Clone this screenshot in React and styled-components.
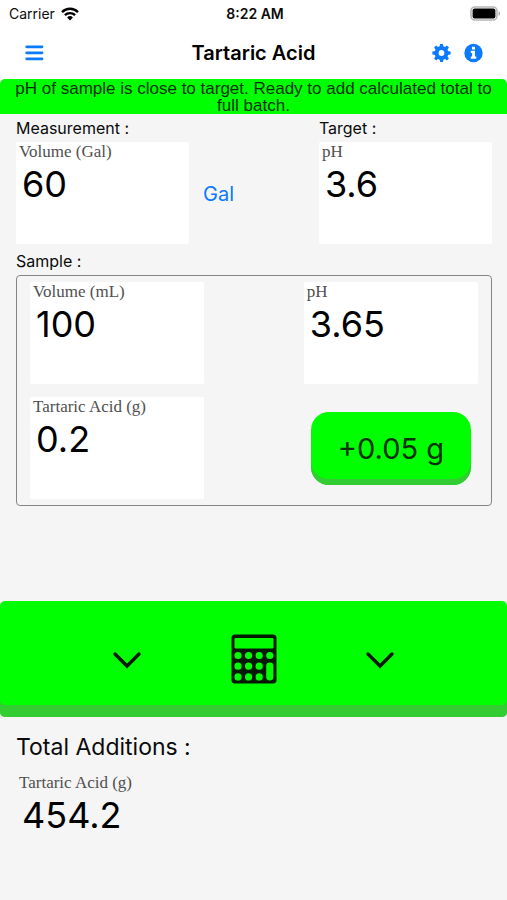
import React from "react";
import styled, { createGlobalStyle } from "styled-components";

const sans = `Inter, "Liberation Sans", sans-serif`;
const serif = `"Liberation Serif", serif`;
const lime = "#00ff00";
const limeShade = "#33cc33";
const blue = "#0a7aff";

const GlobalStyle = createGlobalStyle`
  *, *::before, *::after { box-sizing: border-box; }
  body { margin: 0; background: #f5f5f5; color: #0b0b0b; font-family: ${sans}; }
  button, input { font: inherit; color: inherit; }
  svg { display: block; }
`;

const Screen = styled.div`
  min-height: 100vh;
  display: flex;
  flex-direction: column;
`;

const StatusBar = styled.div`
  display: grid;
  grid-template-columns: 1fr auto 1fr;
  align-items: center;
  height: 27px;
  padding: 0 6px 0 9px;
  background: #fff;
  font-size: 14px;
`;

const Carrier = styled.div`
  display: flex;
  align-items: center;
  gap: 6px;
`;

const Clock = styled.div`
  font-weight: 600;
`;

const BatteryHolder = styled.div`
  justify-self: end;
`;

const NavBar = styled.header`
  display: grid;
  grid-template-columns: 1fr auto 1fr;
  align-items: center;
  height: 52px;
  padding: 0 24px;
  background: #fff;
`;

const Title = styled.h1`
  margin: 0;
  font-size: 20px;
  font-weight: 600;
  line-height: 24px;
  color: #000;
`;

const NavActions = styled.div`
  display: flex;
  justify-content: flex-end;
  gap: 12px;
`;

const IconButton = styled.button`
  display: flex;
  padding: 0;
  border: 0;
  background: none;
  color: ${blue};
  cursor: pointer;
`;

const BannerHolder = styled.div`
  background: linear-gradient(#fff 50%, #f5f5f5 50%);
`;

const Banner = styled.p`
  margin: 0;
  padding: 1px 8px 0;
  border-radius: 5px 5px 0 0;
  background: ${lime};
  font-family: "Liberation Sans", sans-serif;
  font-size: 17px;
  line-height: 17px;
  text-align: center;
  color: #063006;
`;

const Content = styled.main`
  padding: 4px 15px 0 16px;
`;

const MeasureGrid = styled.div`
  display: grid;
  grid-template-columns: 4fr 3fr 4fr;
  row-gap: 4px;
`;

const SectionLabel = styled.h2`
  margin: 0;
  font-size: 16px;
  font-weight: 400;
  line-height: 20px;
`;

const TargetLabel = styled(SectionLabel)`
  grid-column: 3;
`;

const FieldBox = styled.label`
  display: flex;
  flex-direction: column;
  min-width: 0;
  height: 102px;
  padding: 0 3px;
  border-radius: 2px;
  background: ${(p) => (p.$plain ? "transparent" : "#fff")};
`;

const FieldName = styled.span`
  font-family: ${serif};
  font-size: 17px;
  line-height: 20px;
  color: #505050;
`;

const fieldValue = `
  width: 100%;
  height: 44px;
  padding: 0 3px;
  border: 0;
  background: none;
  font-family: ${sans};
  font-size: 36px;
  line-height: 44px;
  color: #000;
  outline: none;
`;

const FieldInput = styled.input`
  ${fieldValue}
`;

const FieldOutput = styled.output`
  ${fieldValue}
`;

const UnitButton = styled.button`
  justify-self: start;
  align-self: center;
  padding: 2px 14px 0;
  border: 0;
  background: none;
  color: ${blue};
  font-size: 20px;
  line-height: 24px;
  cursor: pointer;
`;

const SampleSection = styled.section`
  margin-top: 7px;
`;

const SamplePanel = styled.div`
  display: grid;
  grid-template-columns: 7fr 4fr 7fr;
  row-gap: 13px;
  margin-top: 4px;
  padding: 6px 13px;
  border: 1px solid #858585;
  border-radius: 4px;
`;

const ThirdColumn = styled.div`
  grid-column: 3;
  display: flex;
  flex-direction: column;
  justify-content: center;
`;

const AddButton = styled.button`
  height: 73px;
  margin: 0 7px;
  padding: 0;
  border: 0;
  border-radius: 18px;
  background: ${lime};
  box-shadow: inset 0 -6px 0 ${limeShade};
  color: #063006;
  font-size: 29px;
  cursor: pointer;
`;

const CalculateButton = styled.button`
  display: flex;
  justify-content: center;
  align-items: center;
  width: 100%;
  height: 116px;
  margin-top: 95px;
  padding: 0;
  border: 0;
  border-radius: 5px;
  background: ${lime};
  box-shadow: inset 0 -12px 0 ${limeShade};
  color: #031903;
  cursor: pointer;
`;

const IconSlot = styled.span`
  display: flex;
  justify-content: center;
  width: 25%;
`;

const Totals = styled.section`
  padding: 15px 15px 0 16px;
`;

const TotalsTitle = styled.h2`
  margin: 0 0 11px;
  font-size: 23px;
  font-weight: 400;
  line-height: 30px;
`;

function Field({ name, value }) {
  return (
    <FieldBox>
      <FieldName>{name}</FieldName>
      <FieldInput defaultValue={value} inputMode="decimal" />
    </FieldBox>
  );
}

const WifiIcon = () => (
  <svg width="18" height="14" viewBox="0 0 18 14" fill="none" stroke="#000" strokeWidth="2.4" aria-hidden="true">
    <path d="M1 5.1a11.4 11.4 0 0 1 16 0" />
    <path d="M3.9 8.2a7.2 7.2 0 0 1 10.2 0" />
    <path d="M6.1 10.5a4.1 4.1 0 0 1 5.8 0L9 13.5z" fill="#000" stroke="none" />
  </svg>
);

const BatteryIcon = () => (
  <svg width="31" height="15" viewBox="0 0 31 15" aria-hidden="true">
    <rect x="1" y="1" width="26" height="13" rx="4" fill="#fff" stroke="#b5b5b5" strokeWidth="1.6" />
    <rect x="2.6" y="2.6" width="22.8" height="9.8" rx="2" fill="#000" />
    <path d="M28.6 5.2c2 .8 2 3.8 0 4.6z" fill="#a8a8a8" />
  </svg>
);

const MenuIcon = () => (
  <svg width="20" height="18" viewBox="0 0 20 18" stroke="currentColor" strokeWidth="2.8" strokeLinecap="round" aria-hidden="true">
    <path d="M2.7 2.800h15.300M2.700 8.800h15.300M2.700 14.800h15.300" />
  </svg>
);

const teeth = [0, 45, 90, 135, 180, 225, 270, 315];

const GearIcon = () => (
  <svg width="20" height="20" viewBox="0 0 20 20" aria-hidden="true">
    <circle cx="10.500" cy="10" r="4.900" fill="none" stroke="currentColor" strokeWidth="4" />
    {teeth.map((angle) => (
      <path key={angle} d="M8.600 4l.5-3.100h2.800l.5 3.100z" fill="currentColor" transform={`rotate(${angle} 10.500 10)`} />
    ))}
  </svg>
);

const InfoIcon = () => (
  <svg width="20" height="20" viewBox="0 0 20 20" aria-hidden="true">
    <circle cx="10.500" cy="10" r="9.200" fill="currentColor" />
    <path d="M9 3.700h3v2.700H9zM7.800 7.700H12v5.800h1.300v2.200H7.800v-2.200h1.300V9.900H7.800z" fill="#fff" />
  </svg>
);

const ChevronIcon = () => (
  <svg width="30" height="20" viewBox="0 0 30 20" fill="none" stroke="currentColor" strokeWidth="3.4" strokeLinecap="round" aria-hidden="true">
    <path d="M3 5l12 12L27 5" />
  </svg>
);

const calculatorKeys = [
  [7, 21.5], [17.6, 21.5], [28.2, 21.5], [38.8, 21.5],
  [7, 32.2], [17.6, 32.2], [28.2, 32.2],
  [7, 42.9], [17.6, 42.9], [28.2, 42.9],
];

const CalculatorIcon = () => (
  <svg width="46" height="50" viewBox="0 0 46 50" aria-hidden="true">
    <rect x="0.5" y="0.5" width="45" height="49" rx="3.5" fill="currentColor" />
    <rect x="3.500" y="4" width="39" height="10.5" rx="1.2" fill={lime} />
    {calculatorKeys.map(([x, y]) => (
      <circle key={`${x}-${y}`} cx={x} cy={y} r="3.6" fill={lime} />
    ))}
    <rect x="35.2" y="28.6" width="7.2" height="17.9" rx="3.4" fill={lime} />
  </svg>
);

export default function App() {
  return (
    <Screen>
      <GlobalStyle />
      <StatusBar>
        <Carrier>
          Carrier <WifiIcon />
        </Carrier>
        <Clock>8:22 AM</Clock>
        <BatteryHolder>
          <BatteryIcon />
        </BatteryHolder>
      </StatusBar>
      <NavBar>
        <IconButton aria-label="Menu">
          <MenuIcon />
        </IconButton>
        <Title>Tartaric Acid</Title>
        <NavActions>
          <IconButton aria-label="Settings">
            <GearIcon />
          </IconButton>
          <IconButton aria-label="Information">
            <InfoIcon />
          </IconButton>
        </NavActions>
      </NavBar>
      <BannerHolder>
        <Banner role="status">
          pH of sample is close to target. Ready to add calculated total to full batch.
        </Banner>
      </BannerHolder>
      <Content>
        <MeasureGrid>
          <SectionLabel>Measurement :</SectionLabel>
          <TargetLabel>Target :</TargetLabel>
          <Field name="Volume (Gal)" value="60" />
          <UnitButton>Gal</UnitButton>
          <Field name="pH" value="3.6" />
        </MeasureGrid>
        <SampleSection>
          <SectionLabel>Sample :</SectionLabel>
          <SamplePanel>
            <Field name="Volume (mL)" value="100" />
            <ThirdColumn>
              <Field name="pH" value="3.65" />
            </ThirdColumn>
            <Field name="Tartaric Acid (g)" value="0.2" />
            <ThirdColumn>
              <AddButton>+0.05 g</AddButton>
            </ThirdColumn>
          </SamplePanel>
        </SampleSection>
      </Content>
      <CalculateButton aria-label="Calculate total additions">
        <IconSlot>
          <ChevronIcon />
        </IconSlot>
        <IconSlot>
          <CalculatorIcon />
        </IconSlot>
        <IconSlot>
          <ChevronIcon />
        </IconSlot>
      </CalculateButton>
      <Totals>
        <TotalsTitle>Total Additions :</TotalsTitle>
        <FieldBox as="div" $plain>
          <FieldName id="total-name">Tartaric Acid (g)</FieldName>
          <FieldOutput aria-labelledby="total-name">454.2</FieldOutput>
        </FieldBox>
      </Totals>
    </Screen>
  );
}
